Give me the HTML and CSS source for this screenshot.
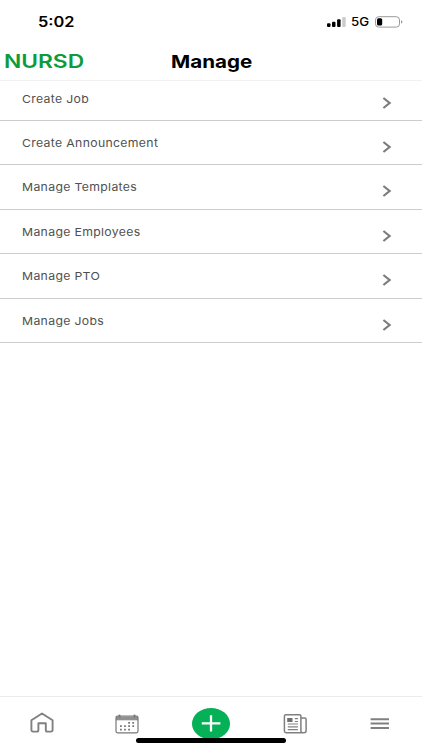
FILE: index.html
```html
<!DOCTYPE html>
<html lang="en">
<head>
<meta charset="utf-8">
<meta name="viewport" content="width=device-width, initial-scale=1">
<title>Manage</title>
<link rel="stylesheet" href="styles.css">
</head>
<body>
<div class="app">
  <div class="status">
    <span class="time wide">5:02</span>
    <div class="indicators">
      <svg class="signal" width="19" height="10" viewBox="0 0 19 10"><rect x="0" y="6.3" width="3.5" height="3.7" rx="1"/><rect x="5" y="4.8" width="3.5" height="5.2" rx="1"/><rect x="10.1" y="2.3" width="3.5" height="7.7" rx="1"/><rect x="15.2" y="0" width="3.5" height="10" rx="1" fill="#ccc"/></svg>
      <span class="network wide">5G</span>
      <svg class="battery" width="28" height="12" viewBox="0 0 28 12"><rect x=".5" y=".7" width="24" height="10.4" rx="3.2" fill="none" stroke="#999"/><rect x="2" y="2.2" width="5.2" height="7.4" rx="1.5"/><path d="M26 4.3q1.4.3 1.4 1.6T26 7.5z" fill="#999"/></svg>
    </div>
  </div>
  <header class="header">
    <span class="brand wide">NURSD</span>
    <h1 class="title wide">Manage</h1>
  </header>
  <main class="list">
    <a class="row"><span class="label wide">Create Job</span><svg class="chevron" width="10" height="12" viewBox="0 0 10 12"><path d="M1.4 1 7.6 6 1.4 11"/></svg></a>
    <a class="row"><span class="label wide">Create Announcement</span><svg class="chevron" width="10" height="12" viewBox="0 0 10 12"><path d="M1.4 1 7.6 6 1.4 11"/></svg></a>
    <a class="row"><span class="label wide">Manage Templates</span><svg class="chevron" width="10" height="12" viewBox="0 0 10 12"><path d="M1.4 1 7.6 6 1.4 11"/></svg></a>
    <a class="row"><span class="label wide">Manage Employees</span><svg class="chevron" width="10" height="12" viewBox="0 0 10 12"><path d="M1.4 1 7.6 6 1.4 11"/></svg></a>
    <a class="row"><span class="label wide">Manage PTO</span><svg class="chevron" width="10" height="12" viewBox="0 0 10 12"><path d="M1.4 1 7.6 6 1.4 11"/></svg></a>
    <a class="row"><span class="label wide">Manage Jobs</span><svg class="chevron" width="10" height="12" viewBox="0 0 10 12"><path d="M1.4 1 7.6 6 1.4 11"/></svg></a>
  </main>
  <nav class="tabs">
    <a class="tab"><svg width="24" height="24" viewBox="0 0 24 24" fill="none" stroke="#808080" stroke-width="1.9" stroke-linejoin="round"><path d="M1.4 8.3 12 1.5l10.6 6.8V17.8q0 1.8-1.8 1.8h-3.4q-1.6 0-1.6-1.6V11.2H8.4V18q0 1.6-1.6 1.6H3.2q-1.8 0-1.8-1.8z"/></svg></a>
    <a class="tab"><svg width="24" height="20" viewBox="0 0 24 20"><path d="M1 3h22v3.3H1z" fill="#909090"/><rect x="1" y="2.2" width="22" height="16.6" rx="1.5" fill="none" stroke="#777" stroke-width="1.2"/><path d="M4.5 1.4v1.3M19.5 1.4v1.3" stroke="#777" stroke-width="2" stroke-linecap="round"/><g fill="none" stroke="#777" stroke-width="1.8" stroke-dasharray="1.8 2.3"><path d="M13.2 8.9h6M5 12.2h14.3M5 15.7h10.2"/></g></svg></a>
    <a class="tab tab-add"><svg width="38" height="32" viewBox="0 0 38 32"><ellipse cx="19" cy="15.7" rx="19" ry="15.7" fill="#06b056"/><path d="M9.8 15.3h18.6M19 7.3v16.2" stroke="#fff" stroke-width="2.3"/></svg></a>
    <a class="tab"><svg width="24" height="20" viewBox="0 0 24 20" fill="none" stroke="#808080" stroke-width="1.5"><path d="M17.9 16.5V2.2q0-1.4-1.5-1.4H2.9Q1.4.8 1.4 2.2v14.9q0 1.7 1.7 1.7h17.8q2.2 0 2.2-2V5.4q0-1.3-1.3-1.3h-3.9M17.9 16.5q0 2.3 2 2.3"/><rect x="4.2" y="4" width="5.3" height="4" fill="#707070" stroke="none"/><path d="M11.8 4.7h3.2M11.8 7.5h3.2M4.8 10h10.1M4.8 12.8h10.1M4.8 15.6h10.1" stroke-width="1.2"/></svg></a>
    <a class="tab"><svg width="20" height="12" viewBox="0 0 20 12"><path d="M.6 1.2h18.4M.6 5.6h18.4M.6 10h18.4" stroke="#808080" stroke-width="2"/></svg></a>
    <span class="home-indicator"></span>
  </nav>
</div>
</body>
</html>
```
FILE: styles.css
```css
* { box-sizing: border-box; }
body { margin: 0; background: #fff; }
.app {
  width: 422px;
  height: 750px;
  display: flex;
  flex-direction: column;
  overflow: hidden;
  font-family: Inter, "Liberation Sans", sans-serif;
  color: #000;
}
/* Wide lettering: glyphs are stretched horizontally from their left edge. */
.wide {
  display: inline-block;
  white-space: nowrap;
  transform: scaleX(1.2);
  transform-origin: left center;
}
.status {
  height: 44px;
  display: flex;
  justify-content: space-between;
  padding: 0 20px 0 38.4px;
}
.time { font-size: 14px; line-height: 18px; font-weight: 600; margin-top: 13px; transform: scaleX(1.17); }
.indicators { display: flex; align-items: flex-start; width: 75px; }
.signal { margin-top: 17px; width: 19px; flex: none; }
.network { font-size: 11.5px; line-height: 14px; font-weight: 500; margin: 15px 0 0 5px; width: 19px; flex: none; transform: scaleX(1.15); }
.battery { margin: 16px 0 0 5px; flex: none; }
.header {
  height: 37px;
  display: grid;
  grid-template-columns: 167px 1fr;
  padding-left: 4px;
  border-bottom: 1px solid #f1f1f1;
}
.brand { font-size: 18.5px; line-height: 22px; font-weight: 600; color: #0d9b3b; margin-top: 6px; transform: scaleX(1.23); }
.title { font-size: 18px; line-height: 22px; font-weight: 700; margin: 7px 0 0; transform: scaleX(1.145); }
.list { flex: 1; }
.row {
  height: 44.4px;
  display: flex;
  justify-content: space-between;
  padding: 0 30px 0 22px;
  border-bottom: 1px solid #ccc;
}
.row:first-child { height: 40px; }
.row:first-child .label { margin-top: 11px; }
.row:first-child .chevron { margin-top: 15.6px; }
.label { font-size: 11px; line-height: 14px; color: #505050; letter-spacing: 0.3px; margin-top: 15.1px; transform: scaleX(1.113); }
.chevron { margin-top: 20px; fill: none; stroke: #7c7c7c; stroke-width: 2.2; }
.tabs {
  position: relative;
  height: 54px;
  display: grid;
  grid-template-columns: repeat(5, 1fr);
  border-top: 1px solid #ececec;
}
.tab { display: flex; align-items: center; justify-content: center; height: 53px; }
.home-indicator {
  position: absolute;
  left: 136px;
  top: 41px;
  width: 150px;
  height: 5px;
  border-radius: 3px;
  background: #000;
}
```
